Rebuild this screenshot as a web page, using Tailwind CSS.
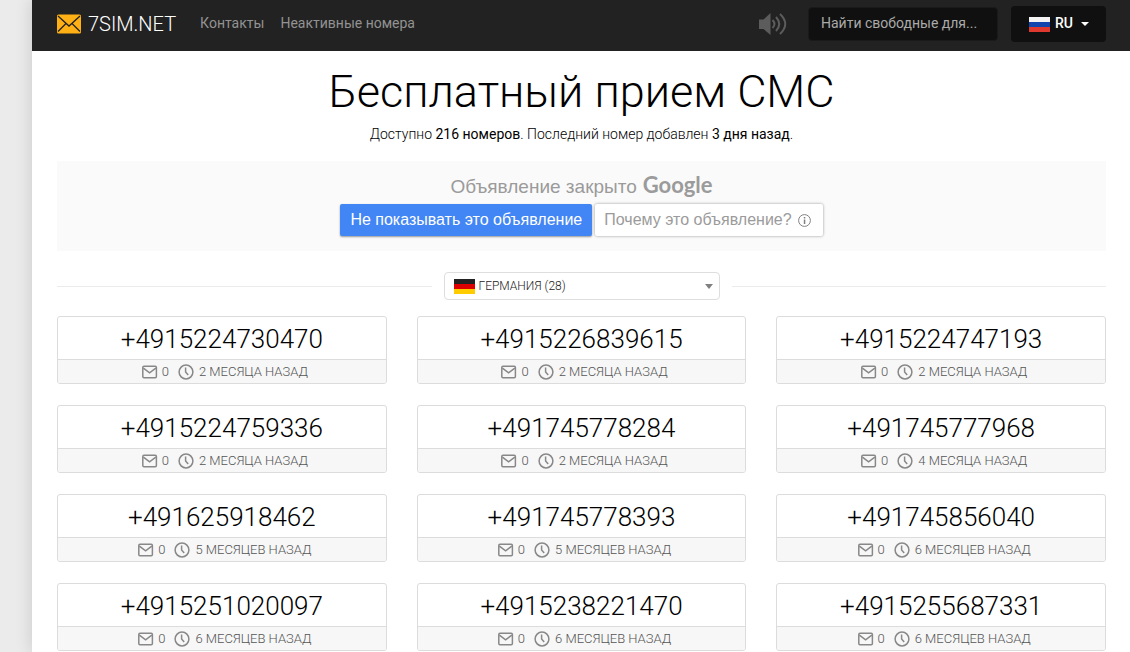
<!DOCTYPE html>
<html lang="ru">
<head>
<meta charset="utf-8">
<meta name="viewport" content="width=device-width, initial-scale=1">
<title>7SIM.NET</title>
<script src="https://cdn.jsdelivr.net/npm/@tailwindcss/browser@4"></script>
</head>
<body class="flex min-h-screen overflow-x-hidden bg-[#ebebeb] pl-8 font-['Roboto',sans-serif] text-black">
<svg class="hidden" aria-hidden="true">
  <symbol id="mail" viewBox="0 0 16 16"><rect x=".8" y="2.300" width="13.600" height="11.400" rx="1.200" fill="none" stroke="currentColor" stroke-width="1.500"/><path d="M1.400 4.200 7.600 8.800 13.800 4.200" fill="none" stroke="currentColor" stroke-width="1.500"/></symbol>
  <symbol id="clock" viewBox="0 0 16 16"><circle cx="8" cy="8" r="6.900" fill="none" stroke="currentColor" stroke-width="1.500"/><path d="M7.600 3.600V8l2.600 3" fill="none" stroke="currentColor" stroke-width="1.500"/></symbol>
</svg>
<div class="min-w-0 flex-1 bg-white shadow-[0_0_16px_rgba(0,0,0,0.15)]">
  <header class="flex h-[51px] items-center bg-[#222] pr-6 pl-[25px] pb-1">
    <a href="#" class="flex items-center gap-[7px] text-xl font-light text-white">
      <svg class="mt-px h-5 w-6" viewBox="0 0 24 20" aria-hidden="true"><rect width="24" height="19" rx="1.5" y=".5" fill="#ffb014"/><path d="M1 2l11 10L23 2M1 17.500l8-8M23 17.500l-8-8" fill="none" stroke="#222" stroke-width="1.300"/></svg>
      7SIM.NET
    </a>
    <nav class="ml-6 flex gap-4 pb-0.5 text-sm text-[#929292]">
      <a href="#">Контакты</a>
      <a href="#">Неактивные номера</a>
    </nav>
    <button class="ml-auto text-[#5c5c5c]" aria-label="Звук">
      <svg class="h-6 w-7" viewBox="0 0 28 24" aria-hidden="true"><path d="M0 7.500h4.500L11.500 1v22l-7-6H0z" fill="currentColor"/><path d="M13.500 8q4 4 0 8M17 5q6.500 7 0 14M21 2q10.500 10 0 20" fill="none" stroke="currentColor" stroke-width="2"/></svg>
    </button>
    <input aria-label="Поиск" placeholder="Найти свободные для..." class="ml-[21px] h-[34px] w-[190px] rounded-[4px] border border-[#1a1a1a] bg-[#101010] px-3 pb-0.5 text-sm text-white placeholder:text-[#aaa]">
    <button class="ml-[13px] flex h-9 w-[95px] items-center rounded-[4px] bg-[#101010] pl-[18px] text-sm font-medium text-white">
      <svg class="mt-px h-[15px] w-[21px]" viewBox="0 0 21 15" aria-hidden="true"><path fill="#f4f4f4" d="M0 0h21v5H0z"/><path fill="#1245ae" d="M0 5h21v5H0z"/><path fill="#df382f" d="M0 10h21v5H0z"/></svg>
      <span class="ml-[5px] pb-0.5">RU</span>
      <svg class="ml-2 h-1 w-2" viewBox="0 0 8 4" aria-hidden="true"><path fill="#fff" d="M0 0h8L4 4z"/></svg>
    </button>
  </header>
  <main class="pr-6 pl-[25px]">
    <h1 class="pt-4 text-center text-[45px] leading-[50px] font-light">Бесплатный прием СМС</h1>
    <p class="mt-[7px] text-center text-sm leading-5 font-light">Доступно <b class="font-normal">216 номеров</b>. Последний номер добавлен <b class="font-normal">3 дня назад</b>.</p>
    <section class="mt-[17px] flex h-[90px] flex-col items-center bg-[#fafafa] pt-[10px] font-['Liberation_Sans',sans-serif]">
      <div class="flex items-baseline gap-[6px] text-[19px] leading-[27px] text-[#9b9b9b]">Объявление закрыто <span class="font-['Lato',sans-serif] text-[22px] font-bold">Google</span></div>
      <div class="mt-1 flex gap-[3px] text-base">
        <button class="h-8 rounded-xs bg-[#4285f4] px-[10px] text-white shadow-[0_1px_2px_rgba(0,0,0,0.4)]">Не показывать это объявление</button>
        <button class="flex h-8 items-center gap-[6px] rounded-xs bg-white pr-3 pl-[9px] text-[#9b9b9b] shadow-[0_0_3px_rgba(0,0,0,0.4)]">Почему это объявление?
          <svg class="mt-px size-[13px]" viewBox="0 0 13 13" aria-hidden="true"><circle cx="6.500" cy="6.500" r="5.900" fill="none" stroke="#808080"/><path d="M5.800 5.500h1.500v4.500H5.800zM5.800 3h1.500v1.500H5.800z" fill="#808080"/></svg>
        </button>
      </div>
    </section>
    <div class="mt-[21px] flex items-center gap-3">
      <div class="h-px flex-1 bg-[#ebebeb]"></div>
      <div class="relative w-[276px]">
        <select aria-label="Страна" class="block h-7 w-full appearance-none rounded-[4px] border border-[#dedede] bg-white pl-[34px] text-xs font-light text-[#222]"><option>ГЕРМАНИЯ (28)</option></select>
        <svg class="pointer-events-none absolute top-[7px] left-[10px] h-[15px] w-[21px]" viewBox="0 0 21 15" aria-hidden="true"><path fill="#222" d="M0 0h21v5H0z"/><path fill="#d00" d="M0 5h21v5H0z"/><path fill="#fc0" d="M0 10h21v5H0z"/></svg>
        <svg class="pointer-events-none absolute top-3 right-[7px] h-[5px] w-2" viewBox="0 0 8 5" aria-hidden="true"><path fill="#808080" d="M0 0h8L4 5z"/></svg>
      </div>
      <div class="h-px flex-1 bg-[#ebebeb]"></div>
    </div>
    <div id="numbers" class="mt-4 grid grid-cols-3 gap-x-[30px] gap-y-[21px]"></div>
  </main>
</div>
<script>
const numbers = [
  ['+4915224730470', '2 МЕСЯЦА НАЗАД'], ['+4915226839615', '2 МЕСЯЦА НАЗАД'], ['+4915224747193', '2 МЕСЯЦА НАЗАД'],
  ['+4915224759336', '2 МЕСЯЦА НАЗАД'], ['+491745778284', '2 МЕСЯЦА НАЗАД'], ['+491745777968', '4 МЕСЯЦА НАЗАД'],
  ['+491625918462', '5 МЕСЯЦЕВ НАЗАД'], ['+491745778393', '5 МЕСЯЦЕВ НАЗАД'], ['+491745856040', '6 МЕСЯЦЕВ НАЗАД'],
  ['+4915251020097', '6 МЕСЯЦЕВ НАЗАД'], ['+4915238221470', '6 МЕСЯЦЕВ НАЗАД'], ['+4915255687331', '6 МЕСЯЦЕВ НАЗАД']
];
document.getElementById('numbers').innerHTML = numbers.map(([number, age]) => `
  <a href="#" class="block overflow-hidden rounded-[3px] border border-[#dcdcdc] text-center font-light">
    <div class="h-[42px] text-[26px] leading-[44px]">${number}</div>
    <div class="flex h-6 items-center justify-center border-t border-[#dcdcdc] bg-[#f7f7f7] pl-[6px] text-[13px] text-[#555]">
      <svg class="size-4 text-[#888]" aria-hidden="true"><use href="#mail"/></svg><span class="ml-1">0</span>
      <svg class="ml-[9px] size-4 text-[#888]" aria-hidden="true"><use href="#clock"/></svg><span class="ml-[5px]">${age}</span>
    </div>
  </a>`).join('');
</script>
</body>
</html>
